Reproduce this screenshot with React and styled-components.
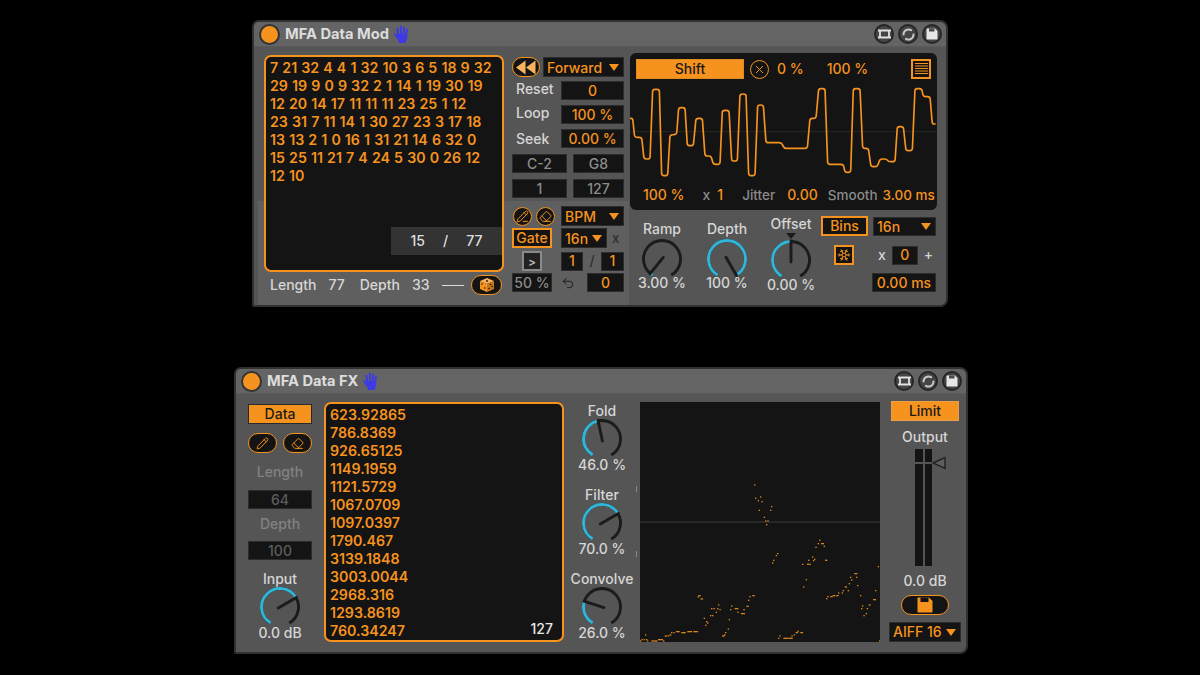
import React from "react";
import styled, { createGlobalStyle } from "styled-components";
import { Pencil, PencilLine, Eraser, X, Snowflake, Undo2 } from "lucide-react";

const ORANGE = "#f6931e";
const DARK = "#141414";

const GlobalStyle = createGlobalStyle`
  html, body {
    margin: 0;
    background: #000;
    font-family: Inter, "Liberation Sans", sans-serif;
  }
`;

const toneColor = { orange: ORANGE, grey: "#8b8b8b", dim: "#5c5c5c", light: "#d6d6d6", white: "#e8e8e8", ink: "#2e2e2e" };

const wavePoints = [
  [0,115],[8,115],[14,172],[35,172],[42,237],[60,237],[68,28],[88,28],[95,287],[113,287],[120,165],[140,163],[146,83],[165,83],
  [172,197],[190,197],[198,115],[217,115],[225,228],[243,228],[250,253],[270,253],[277,91],[297,91],[305,243],[322,243],[330,42],[348,42],
  [356,287],[375,287],[383,75],[400,75],[408,188],[455,188],[462,205],[532,205],[540,115],[558,115],[566,26],[585,26],[593,253],[640,253],
  [645,277],[662,277],[670,26],[690,26],[698,205],[715,205],[723,260],[742,260],[750,237],[770,237],[775,245],[795,245],[802,140],[820,140],
  [828,212],[847,212],[855,26],[875,26],[880,50],[900,50],[907,132],[917,132],
];

// rounds every corner of the trace, the device smooths its steps
const roundedTrace = (points, radius) => {
  const toward = (a, b) => {
    const d = Math.hypot(b[0] - a[0], b[1] - a[1]);
    const r = Math.min(radius, d / 2);
    return [a[0] + ((b[0] - a[0]) * r) / d, a[1] + ((b[1] - a[1]) * r) / d];
  };
  let d = `M${points[0].join(" ")}`;
  for (let i = 1; i < points.length - 1; i++) {
    const p = points[i];
    d += ` L${toward(p, points[i - 1]).join(" ")} Q${p.join(" ")} ${toward(p, points[i + 1]).join(" ")}`;
  }
  return `${d} L${points[points.length - 1].join(" ")}`;
};

const scatter = [
  [354,46],[357,86],[372,82],[365,93],[376,96],[405,111],[368,122],[402,122],[383,143],[387,154],[394,154],[390,165],
  [549,212],[545,222],[555,222,8],[538,233],[563,230],[528,262],[516,272],[534,269],[531,273],[567,272,6],[498,284],[513,284,6],[520,284],
  [423,252],[419,258],[411,272],[408,280],[509,330],[501,352],
  [655,312,8],[642,323],[660,323],[645,331],[638,342],[663,348],[626,352,6],[606,370],[620,363],[635,363],[617,370],[601,378,6],[590,378,7],[583,381,6],[574,381],[570,387],[672,378],
  [725,291],[717,363],[711,390,8],[698,406,5],[678,409],[675,417],[692,417],[689,432],[682,438],
  [187,378,6],[185,382],[194,388,6],
  [246,406],[225,417],[232,417],[243,417],[250,420],[239,428],[222,438],[228,438],[203,446],[210,456],[213,460],[207,467],
  [349,378,6],[340,381],[336,392],[331,410,6],[322,420],[285,409],[282,420],[296,417,10],[304,428],[315,432,11],[278,450],[275,478],[267,489],[264,496],[258,499,7],
  [120,486,10],[136,489,12],[154,486,13],[172,486,13],[112,489],[105,489],[100,496,5],[95,499],[86,499,6],[27,496],[12,514],[16,510],[23,510],[30,510],[33,514],[46,514,14],[66,510,12],[60,514],[77,510],[81,514],
  [430,499],[426,506],[442,506,14],[458,506,11],[466,499],[473,496],[479,489,6],[484,485],[493,489,7],[729,514],
];

const modLines = [
  "7 21 32 4 4 1 32 10 3 6 5 18 9 32",
  "29 19 9 0 9 32 2 1 14 1 19 30 19",
  "12 20 14 17 11 11 11 23 25 1 12",
  "23 31 7 11 14 1 30 27 23 3 17 18",
  "13 13 2 1 0 16 1 31 21 14 6 32 0",
  "15 25 11 21 7 4 24 5 30 0 26 12",
  "12 10",
];

const fxLines = [
  "623.92865", "786.8369", "926.65125", "1149.1959", "1121.5729", "1067.0709", "1097.0397",
  "1790.467", "3139.1848", "3003.0044", "2968.316", "1293.8619", "760.34247",
];

const Page = styled.div`
  width: 1200px;
  height: 675px;
  overflow: hidden;
  display: flex;
  flex-direction: column;
  background: #000;
`;

const Device = styled.section`
  box-sizing: border-box;
  width: ${(p) => p.$width}px;
  height: 287px;
  margin: ${(p) => p.$margin};
  border: 2px solid #313131;
  border-radius: 7px 8px 8px 2px;
  background: #555;
  overflow: hidden;
`;

const TitleBar = styled.header`
  height: 25px;
  display: flex;
  align-items: center;
  padding-left: 5px;
  background: #646464;
  border-bottom: 1px solid #5a5a5a;
  box-sizing: border-box;
`;

const PowerDot = styled.span`
  box-sizing: border-box;
  width: 21px;
  height: 21px;
  border-radius: 50%;
  background: ${ORANGE};
  border: 2px solid #343434;
`;

const Title = styled.h1`
  margin: 0 4px 0 5px;
  font-size: 14.7px;
  line-height: 18px;
  font-weight: 700;
  color: #dcdcdc;
`;

const HeadTools = styled.div`
  margin-left: auto;
  margin-right: 4px;
  display: flex;
  gap: 4px;
`;

const HeadTool = styled.span`
  box-sizing: border-box;
  width: 20px;
  height: 20px;
  border-radius: 50%;
  background: #454545;
  border: 2px solid #262626;
  display: flex;
  align-items: center;
  justify-content: center;
`;

const ModBody = styled.div`
  display: flex;
  align-items: flex-start;
  height: 260px;
  padding: 6px 0 0 10px;
  box-sizing: border-box;
  background: linear-gradient(#5f5f5f, #5f5f5f) 4px 154px / 371px 100% no-repeat, #555;
`;

const FxBody = styled.div`
  display: flex;
  align-items: flex-start;
  padding: 7px 0 0 12px;
`;

const DataCol = styled.div`
  width: 240px;
  padding-top: 2px;
`;

const DataBox = styled.div`
  box-sizing: border-box;
  position: relative;
  width: 240px;
  height: ${(p) => p.$height}px;
  margin: ${(p) => p.$margin || 0};
  padding: 2px 0 0 4px;
  background: ${DARK};
  border: 2.5px solid ${ORANGE};
  border-radius: 7px;
  color: ${ORANGE};
  font-size: 14.2px;
  line-height: 18px;
  font-weight: 600;
  word-spacing: 0.55px;
  white-space: nowrap;
`;

const Counter = styled.div`
  position: absolute;
  right: 0;
  bottom: 15px;
  width: 111px;
  height: 28px;
  display: flex;
  align-items: center;
  justify-content: center;
  gap: 18px;
  background: #333;
  color: #dedede;
  font-size: 14px;
  font-weight: 500;
`;

const Corner = styled.div`
  position: absolute;
  right: 9px;
  bottom: 2px;
  color: #e8e8e8;
  font-size: 14px;
  font-weight: 500;
`;

const LengthRow = styled.div`
  display: flex;
  align-items: center;
  height: 24px;
  margin-top: 1px;
  padding-left: 6px;
  font-size: 14px;
  font-weight: 500;
`;

const Label = styled.span`
  color: ${(p) => toneColor[p.$tone || "light"]};
  margin-left: ${(p) => p.$ml || 0}px;
  margin-bottom: ${(p) => p.$lift || 0}px;
  font-size: ${(p) => p.$size || 14}px;
  line-height: 16px;
  font-weight: 500;
  white-space: nowrap;
`;

const Rule = styled.span`
  width: 22px;
  height: 1px;
  margin: 0 7px 0 13px;
  background: #ddd;
`;

const PillButton = styled.span`
  box-sizing: border-box;
  flex: none;
  width: ${(p) => p.$w || 29}px;
  height: ${(p) => p.$h || 20}px;
  display: flex;
  align-items: center;
  justify-content: center;
  border: 1.5px solid ${ORANGE};
  border-radius: 11px;
  background: ${DARK};
  color: ${ORANGE};
`;

const RoundButton = styled(PillButton)`
  width: 19px;
  height: 19px;
  border-radius: 50%;
`;

const MidCol = styled.div`
  width: 112px;
  margin-left: 8px;
  padding-top: 4px;
`;

const Row = styled.div`
  display: flex;
  align-items: center;
  justify-content: space-between;
  min-height: 19px;
  margin-top: ${(p) => p.$mt || 0}px;
`;

const SplitRow = styled.div`
  display: grid;
  grid-template-columns: 40px 63px;
  column-gap: 9px;
  align-items: center;
  min-height: 19px;
  margin-top: ${(p) => p.$mt || 0}px;
`;

const Cluster = styled.div`
  display: flex;
  align-items: center;
  justify-content: space-between;
`;

const ToolPair = styled.div`
  display: flex;
  justify-content: space-between;
  width: 42px;
  margin-left: 1px;
`;

const Field = styled.div`
  box-sizing: border-box;
  width: ${(p) => (p.$w ? `${p.$w}px` : "100%")};
  height: 19px;
  margin: ${(p) => p.$margin || 0};
  padding-bottom: 1px;
  display: flex;
  align-items: center;
  justify-content: center;
  background: ${DARK};
  border: 1px solid #2c2c2c;
  color: ${(p) => toneColor[p.$tone || "orange"]};
  font-size: 14px;
  font-weight: 500;
`;

const Select = styled.div`
  box-sizing: border-box;
  width: ${(p) => p.$w}px;
  height: ${(p) => p.$h || 20}px;
  margin-top: ${(p) => p.$mt || 0}px;
  flex: none;
  display: flex;
  align-items: center;
  justify-content: space-between;
  padding: 0 4px 0 3px;
  background: ${DARK};
  border: 1px solid #2c2c2c;
  color: ${ORANGE};
  font-size: 14px;
  font-weight: 500;
`;

const Caret = styled.span`
  width: 0;
  height: 0;
  border-left: 5px solid transparent;
  border-right: 5px solid transparent;
  border-top: 7px solid ${ORANGE};
`;

const OutlineButton = styled.div`
  box-sizing: border-box;
  width: ${(p) => p.$w}px;
  height: 20px;
  padding-bottom: 1px;
  display: flex;
  align-items: center;
  justify-content: center;
  background: ${DARK};
  border: 2px solid ${ORANGE};
  color: ${ORANGE};
  font-size: 14px;
  font-weight: 500;
`;

const FillButton = styled.div`
  box-sizing: border-box;
  flex: none;
  width: ${(p) => p.$w}px;
  height: 20px;
  padding-bottom: 1px;
  display: flex;
  align-items: center;
  justify-content: center;
  background: ${ORANGE};
  border: 1px solid ${(p) => p.$edge || "#b87a2a"};
  color: #1a1a1a;
  font-size: 14px;
  font-weight: 500;
`;

const ArrowButton = styled.div`
  box-sizing: border-box;
  width: 20px;
  height: 20px;
  margin: 0 auto;
  display: flex;
  align-items: center;
  justify-content: center;
  background: #222;
  border: 2px solid #8a8a8a;
  color: #b5b5b5;
  font-size: 12px;
  font-weight: 600;
`;

const WaveCol = styled.div`
  width: 307px;
  margin-left: 6px;
`;

const Display = styled.div`
  box-sizing: border-box;
  height: 157px;
  padding-top: 6px;
  background: ${DARK};
  border-radius: 6px;
  overflow: hidden;
`;

const DisplayTop = styled.div`
  display: flex;
  align-items: center;
  height: 20px;
  padding: 0 7px 0 6px;
`;

const SquareIcon = styled.span`
  box-sizing: border-box;
  flex: none;
  width: 20px;
  height: 20px;
  margin-left: ${(p) => p.$ml || 0}px;
  display: flex;
  align-items: center;
  justify-content: center;
  background: ${DARK};
  border: 2px solid ${ORANGE};
  color: ${ORANGE};
`;

const ClearButton = styled(PillButton)`
  width: 19px;
  height: 19px;
  margin-left: 6px;
  border-radius: 50%;
`;

const WaveSvg = styled.svg`
  display: block;
  width: 307px;
  height: 100px;
  margin-top: 1px;
`;

const DisplayBottom = styled.div`
  display: flex;
  align-items: center;
  height: 20px;
  margin-top: 5px;
  padding-left: 13px;
`;

const ControlRow = styled.div`
  display: flex;
  margin-top: 6px;
  padding-left: 5px;
`;

const KnobBox = styled.div`
  width: 54px;
  flex: none;
  display: flex;
  flex-direction: column;
  align-items: center;
  margin: ${(p) => p.$margin || 0};
  color: #d6d6d6;
  font-size: 14px;
  font-weight: 500;
  line-height: 16px;
  white-space: nowrap;
`;

const Marker = styled.span`
  width: 0;
  height: 0;
  margin-top: 1px;
  border-left: 5px solid transparent;
  border-right: 5px solid transparent;
  border-top: 6px solid #1b1b1b;
`;

const KnobSvg = styled.svg`
  display: block;
  width: 42px;
  height: 42px;
  margin: ${(p) => p.$gap}px 0 ${(p) => p.$after}px;
`;

const SyncPanel = styled.div`
  width: 115px;
  margin-left: 3px;
`;

const SyncTop = styled.div`
  display: flex;
  justify-content: space-between;
  align-items: flex-end;
  height: 20px;
`;

const SyncMid = styled.div`
  display: grid;
  grid-template-columns: 51px 1fr;
  margin-top: 9px;
  align-items: center;
`;

const MultRow = styled.div`
  display: flex;
  align-items: center;
  justify-content: space-between;
  padding-right: 3px;
  padding-left: 6px;
`;

const SideCol = styled.div`
  width: 64px;
  padding-top: 3px;
  display: flex;
  flex-direction: column;
  align-items: center;
`;

const PillPair = styled.div`
  width: 64px;
  display: flex;
  justify-content: space-between;
  margin-top: 9px;
`;

const FaintLabel = styled.div`
  margin: ${(p) => p.$mt}px 0 ${(p) => p.$mb}px;
  color: #828282;
  font-size: 14px;
  line-height: 16px;
  font-weight: 500;
`;

const KnobStack = styled.div`
  width: 54px;
  margin-left: 11px;
  padding-top: 2px;
  display: flex;
  flex-direction: column;
  gap: 14px;
`;

const Plot = styled.div`
  position: relative;
  width: 240px;
  height: 240px;
  flex: none;
  margin: 1px 0 0 11px;
  background: ${DARK};

  &::before,
  &::after {
    content: "";
    position: absolute;
    left: -4px;
    width: 1px;
    height: 6px;
    background: #8a8a8a;
  }
  &::before {
    top: 84px;
  }
  &::after {
    top: 149px;
  }
`;

const PlotSvg = styled.svg`
  display: block;
`;

const OutCol = styled.div`
  width: 72px;
  margin-left: 9px;
  display: flex;
  flex-direction: column;
  align-items: center;
  color: #d6d6d6;
  font-size: 14px;
  line-height: 16px;
  font-weight: 500;
`;

const OutLabel = styled.div`
  margin-top: ${(p) => p.$mt}px;
`;

const Meter = styled.div`
  position: relative;
  width: 17px;
  height: 117px;
  margin: 4px 3px 0 0;
  display: flex;
  justify-content: space-between;
`;

const MeterBar = styled.span`
  width: 7.5px;
  background: linear-gradient(${DARK}, ${DARK}) 0 0 / 100% 13px no-repeat, linear-gradient(${DARK}, ${DARK}) 0 15px / 100% 100% no-repeat;
`;

const Thumb = styled.svg`
  position: absolute;
  left: 17px;
  top: 7px;
`;

const SavePill = styled(PillButton)`
  margin-top: 6px;
`;

const Hand = () => (
  <svg width="17" height="19" viewBox="0 0 17 19" fill="none" stroke="#3d3ae6" strokeLinecap="round">
    <path d="M5.5 11 L4.4 3.4 M8 10 L7.8 1.6 M10.5 10 L11.2 2.4 M12.8 11 L14 4.8" strokeWidth="2" />
    <path d="M2 9 L4.6 13" strokeWidth="2" />
    <path d="M4.5 10 L13.5 10 L13.6 13 L12 17.4 L6.6 17.4 Z" fill="#3d3ae6" strokeWidth="1.4" />
  </svg>
);

const HeadIcons = () => (
  <HeadTools>
    <HeadTool>
      <svg width="13" height="12" viewBox="0 0 13 12" fill="none" stroke="#e2e2e2" strokeWidth="1.8">
        <rect x="2" y="2.5" width="9" height="7" rx="1" />
        <path d="M0 2.5h2M11 2.5h2M0 9.5h2M11 9.5h2" />
      </svg>
    </HeadTool>
    <HeadTool>
      <svg width="13" height="13" viewBox="0 0 13 13" fill="none" stroke="#c8c8c8" strokeWidth="2" strokeLinecap="round">
        <path d="M1.5 6.5 A5 5 0 0 1 9 2.2" />
        <path d="M11.5 6.5 A5 5 0 0 1 4 10.8" />
      </svg>
    </HeadTool>
    <HeadTool>
      <svg width="12" height="12" viewBox="0 0 12 12">
        <path d="M0.5 1 Q0.5 0.5 1 0.5 H9 L11.5 3 V11 Q11.5 11.5 11 11.5 H1 Q0.5 11.5 0.5 11 Z" fill="#e6e6e6" />
        <rect x="3" y="0.5" width="5.5" height="3" fill="#4b4b4b" />
      </svg>
    </HeadTool>
  </HeadTools>
);

const Floppy = () => (
  <svg width="16" height="16" viewBox="0 0 16 16">
    <path d="M0.5 1.2 Q0.5 0.5 1.2 0.5 H12 L15.5 4 V14.8 Q15.5 15.5 14.8 15.5 H1.2 Q0.5 15.5 0.5 14.8 Z" fill={ORANGE} />
    <rect x="3.5" y="0.5" width="8" height="4.5" fill="#141414" />
  </svg>
);

const Rewind = () => (
  <svg width="22" height="15" viewBox="0 0 22 15" fill="#f8b25c">
    <path d="M10.5 0.5 V14.5 L1 7.5 Z" />
    <path d="M20.5 0.5 V14.5 L11 7.5 Z" />
  </svg>
);

const Dice = () => (
  <svg width="16" height="16" viewBox="0 0 16 16">
    <path d="M8 1 L15 4 L8 7 L1 4 Z" fill="#f8b25c" />
    <path d="M1 4 L8 7 V15 L1 12 Z" fill={ORANGE} />
    <path d="M15 4 L8 7 V15 L15 12 Z" fill="#c9761a" />
    <g fill="#141414">
      <circle cx="8" cy="4" r="0.9" />
      <circle cx="3" cy="7" r="0.8" />
      <circle cx="5.8" cy="11" r="0.8" />
      <circle cx="11.5" cy="7.5" r="0.8" />
      <circle cx="13" cy="9.5" r="0.8" />
      <circle cx="10" cy="11.5" r="0.8" />
    </g>
  </svg>
);

const LinesIcon = () => (
  <svg width="13" height="12" viewBox="0 0 13 12" stroke={ORANGE} strokeWidth="1">
    <path d="M0 .5h13M0 3h13M0 5.500h13M0 8h13M0 10.500h13" />
  </svg>
);

const polar = (r, deg) => {
  const a = (deg * Math.PI) / 180;
  return [21 + r * Math.sin(a), 21 - r * Math.cos(a)];
};

const arc = (r, from, to) => {
  const [x1, y1] = polar(r, from);
  const [x2, y2] = polar(r, to);
  return `M${x1} ${y1} A${r} ${r} 0 ${to - from > 180 ? 1 : 0} 1 ${x2} ${y2}`;
};

const Knob = ({ label, value, level, gap = -1, after = -3, margin, marker }) => {
  const end = -150 + 300 * level;
  const [nx, ny] = polar(19, end);
  return (
    <KnobBox $margin={margin}>
      <span>{label}</span>
      {marker && <Marker />}
      <KnobSvg viewBox="0 0 42 42" $gap={gap} $after={after} fill="none" strokeWidth="2.9">
        <path d={arc(18.5, -150, 150)} stroke="#1b1b1b" />
        <path d={arc(18.5, -150, end)} stroke="#2fb6d8" />
        <path d={`M${polar(2, end + 180).join(" ")} L${nx} ${ny}`} stroke="#1b1b1b" strokeLinecap="round" />
      </KnobSvg>
      <span>{value}</span>
    </KnobBox>
  );
};

const DataMod = () => (
  <Device $width={696} $margin="20px 0 0 252px">
    <TitleBar>
      <PowerDot />
      <Title>MFA Data Mod</Title>
      <Hand />
      <HeadIcons />
    </TitleBar>
    <ModBody>
      <DataCol>
        <DataBox $height={217}>
          {modLines.map((line) => (
            <div key={line}>{line}</div>
          ))}
          <Counter>
            <span>15</span>
            <span>/</span>
            <span>77</span>
          </Counter>
        </DataBox>
        <LengthRow>
          <Label>Length</Label>
          <Label $ml={12}>77</Label>
          <Label $ml={15}>Depth</Label>
          <Label $ml={12}>33</Label>
          <Rule />
          <PillButton $w={31}>
            <Dice />
          </PillButton>
        </LengthRow>
      </DataCol>

      <MidCol>
        <Row>
          <PillButton $w={28}>
            <Rewind />
          </PillButton>
          <Select $w={81}>
            Forward
            <Caret />
          </Select>
        </Row>
        <Row $mt={4}>
          <Label $ml={4} $lift={3}>Reset</Label>
          <Field $w={63}>0</Field>
        </Row>
        <Row $mt={5}>
          <Label $ml={4} $lift={3}>Loop</Label>
          <Field $w={63}>100 %</Field>
        </Row>
        <Row $mt={5}>
          <Label $ml={4}>Seek</Label>
          <Field $w={63}>0.00 %</Field>
        </Row>
        <Row $mt={6}>
          <Field $w={55} $tone="grey">C-2</Field>
          <Field $w={51} $tone="grey">G8</Field>
        </Row>
        <Row $mt={6}>
          <Field $w={55} $tone="grey">1</Field>
          <Field $w={51} $tone="grey">127</Field>
        </Row>
        <SplitRow $mt={8}>
          <ToolPair>
            <RoundButton>
              <PencilLine size={13} strokeWidth={1.8} />
            </RoundButton>
            <RoundButton>
              <Eraser size={13} strokeWidth={1.8} />
            </RoundButton>
          </ToolPair>
          <Select $w={63}>
            BPM
            <Caret />
          </Select>
        </SplitRow>
        <SplitRow $mt={2}>
          <OutlineButton $w={40}>Gate</OutlineButton>
          <Cluster>
            <Select $w={46}>
              16n
              <Caret />
            </Select>
            <Label $tone="ink" $size={13}>x</Label>
            <span />
          </Cluster>
        </SplitRow>
        <SplitRow $mt={3}>
          <ArrowButton>&gt;</ArrowButton>
          <Cluster>
            <Field $w={22}>1</Field>
            <Label $tone="ink">/</Label>
            <Field $w={23}>1</Field>
          </Cluster>
        </SplitRow>
        <SplitRow $mt={2}>
          <Field $w={40} $tone="grey">50 %</Field>
          <Cluster>
            <Undo2 size={14} color="#1c1c1c" strokeWidth={1.7} />
            <Field $w={37}>0</Field>
          </Cluster>
        </SplitRow>
      </MidCol>

      <WaveCol>
        <Display>
          <DisplayTop>
            <FillButton $w={108} $edge="#e08a22">Shift</FillButton>
            <ClearButton>
              <X size={13} strokeWidth={1.8} />
            </ClearButton>
            <Label $tone="orange" $ml={8}>0 %</Label>
            <Label $tone="orange" $ml={23}>100 %</Label>
            <SquareIcon $ml={43}>
              <LinesIcon />
            </SquareIcon>
          </DisplayTop>
          <WaveSvg viewBox="0 0 921 300" fill="none">
            <path d="M0 155 H921" stroke="#333" strokeWidth="2" />
            <path d={roundedTrace(wavePoints, 7)} stroke={ORANGE} strokeWidth="5" />
          </WaveSvg>
          <DisplayBottom>
            <Label $tone="orange">100 %</Label>
            <Label $tone="grey" $ml={18}>x</Label>
            <Label $tone="orange" $ml={7}>1</Label>
            <Label $tone="grey" $ml={19} $size={13.5}>Jitter</Label>
            <Label $tone="orange" $ml={12}>0.00</Label>
            <Label $tone="grey" $ml={10} $size={13.5}>Smooth</Label>
            <Label $tone="orange" $ml={5} $size={13.5}>3.00 ms</Label>
          </DisplayBottom>
        </Display>
        <ControlRow>
          <Knob label="Ramp" value="3.00 %" level={0.03} margin="5px 11px 0 0" gap={1} after={-5} />
          <Knob label="Depth" value="100 %" level={1} margin="5px 10px 0 0" gap={1} after={-5} />
          <Knob label="Offset" value="0.00 %" level={0.5} gap={0} after={-4} marker />
          <SyncPanel>
            <SyncTop>
              <OutlineButton $w={47}>Bins</OutlineButton>
              <Select $w={63} $h={19}>
                16n
                <Caret />
              </Select>
            </SyncTop>
            <SyncMid>
              <SquareIcon $ml={13}>
                <Snowflake size={14} strokeWidth={1.6} />
              </SquareIcon>
              <MultRow>
                <Label>x</Label>
                <Field $w={26}>0</Field>
                <Label>+</Label>
              </MultRow>
            </SyncMid>
            <Field $w={64} $margin="8px 0 0 51px">0.00 ms</Field>
          </SyncPanel>
        </ControlRow>
      </WaveCol>
    </ModBody>
  </Device>
);

const DataFx = () => (
  <Device $width={734} $margin="60px 0 0 234px">
    <TitleBar>
      <PowerDot />
      <Title>MFA Data FX</Title>
      <Hand />
      <HeadIcons />
    </TitleBar>
    <FxBody>
      <SideCol>
        <FillButton $w={64} $edge="#2a2a2a">Data</FillButton>
        <PillPair>
          <PillButton>
            <Pencil size={13} strokeWidth={1.8} />
          </PillButton>
          <PillButton>
            <Eraser size={13} strokeWidth={1.8} />
          </PillButton>
        </PillPair>
        <FaintLabel $mt={11} $mb={10}>Length</FaintLabel>
        <Field $tone="dim">64</Field>
        <FaintLabel $mt={7} $mb={9}>Depth</FaintLabel>
        <Field $tone="dim">100</Field>
        <Knob label="Input" value="0.0 dB" level={0.7} margin="11px 0 0" />
      </SideCol>

      <DataBox $height={240} $margin="1px 0 0 12px">
        {fxLines.map((line) => (
          <div key={line}>{line}</div>
        ))}
        <Corner>127</Corner>
      </DataBox>

      <KnobStack>
        <Knob label="Fold" value="46.0 %" level={0.46} />
        <Knob label="Filter" value="70.0 %" level={0.7} />
        <Knob label="Convolve" value="26.0 %" level={0.26} />
      </KnobStack>

      <Plot>
        <PlotSvg width="240" height="240" viewBox="0 0 240 240">
          <rect x="0" y="119.5" width="240" height="1" fill="#3a3a3a" />
          {scatter.map(([x, y, w = 3], i) => (
            <rect key={i} x={x / 3 - 4} y={y / 3 + 68 - 1} width={w / 3 + 0.4} height="1.3" fill="#d98520" />
          ))}
        </PlotSvg>
      </Plot>

      <OutCol>
        <FillButton $w={68} $edge="#e9a04a">Limit</FillButton>
        <OutLabel $mt={8}>Output</OutLabel>
        <Meter>
          <MeterBar />
          <MeterBar />
          <Thumb width="14" height="14" viewBox="0 0 14 14" fill="#5e5e5e" stroke="#222" strokeWidth="1.4">
            <path d="M1 7 L13 1.5 V12.5 Z" />
          </Thumb>
        </Meter>
        <OutLabel $mt={7}>0.0 dB</OutLabel>
        <SavePill $w={48}>
          <Floppy />
        </SavePill>
        <Select $w={72} $mt={7}>
          AIFF 16
          <Caret />
        </Select>
      </OutCol>
    </FxBody>
  </Device>
);

const App = () => (
  <Page>
    <GlobalStyle />
    <DataMod />
    <DataFx />
  </Page>
);

export default App;
